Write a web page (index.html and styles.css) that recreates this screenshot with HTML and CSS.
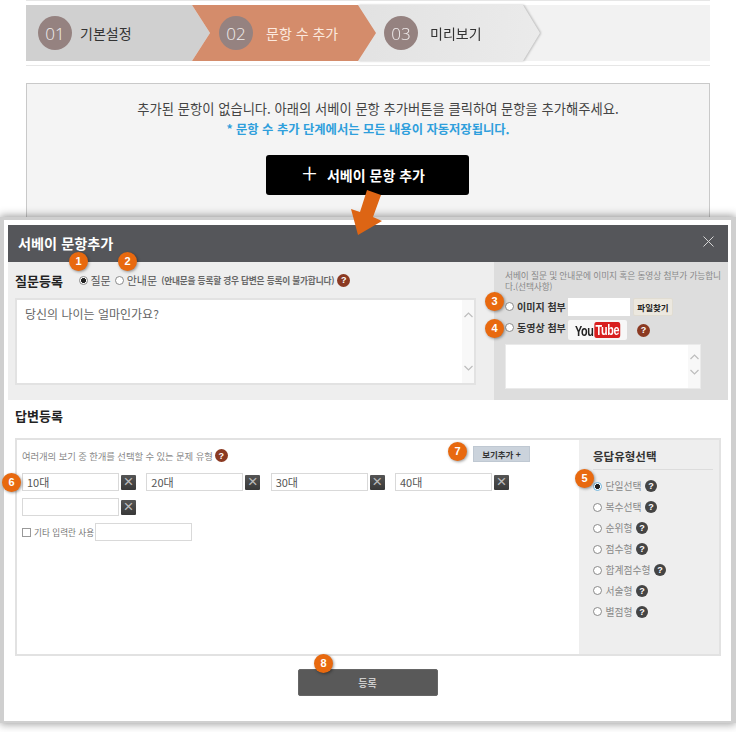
FILE: index.html
```html
<!DOCTYPE html>
<html lang="ko">
<head>
<meta charset="utf-8">
<title>서베이 문항추가</title>
<link rel="stylesheet" href="styles.css">
</head>
<body>
<div class="page">
  <div class="rule rule-top"></div>
  <ol class="steps">
    <li class="step step-done"><span class="step-no">01</span><span class="step-label">기본설정</span></li>
    <li class="step step-active"><span class="step-no">02</span><span class="step-label">문항 수 추가</span></li>
    <li class="step step-next"><span class="step-no">03</span><span class="step-label">미리보기</span></li>
  </ol>
  <div class="rule"></div>
  <section class="empty">
    <p class="empty-text">추가된 문항이 없습니다. 아래의 서베이 문항 추가버튼을 클릭하여 문항을 추가해주세요.</p>
    <p class="empty-note">* 문항 수 추가 단계에서는 모든 내용이 자동저장됩니다.</p>
    <button class="add-btn" type="button"><span class="plus">+</span>서베이 문항 추가</button>
  </section>
</div>

<div class="modal">
  <header class="modal-head">
    <h1 class="modal-title">서베이 문항추가</h1>
    <svg class="modal-close" width="11" height="11" viewBox="0 0 11 11"><path d="M.5.5l10 10M10.5.5l-10 10" stroke="#d5d5d5" stroke-width="1" fill="none"/></svg>
  </header>

  <div class="question">
    <div class="q-left">
      <div class="q-row">
        <h2 class="section-title q-title">질문등록</h2>
        <span class="radio radio-on"></span><span class="q-opt">질문</span>
        <span class="radio q-radio2"></span><span class="q-opt">안내문</span>
        <span class="q-hint">(안내문을 등록할 경우 답변은 등록이 불가합니다)</span>
        <span class="help help-red">?</span>
      </div>
      <div class="area area-q">
        <span>당신의 나이는 얼마인가요?</span>
        <div class="scroll scroll-q">
          <svg width="9" height="6" viewBox="0 0 9 6"><path d="M.5 5L4.5 1l4 4" class="chev"/></svg>
          <svg width="9" height="6" viewBox="0 0 9 6"><path d="M.5 1l4 4 4-4" class="chev"/></svg>
        </div>
      </div>
    </div>
    <div class="q-right">
      <p class="attach-note">서베이 질문 및 안내문에 이미지 혹은 동영상 첨부가 가능합니<br>다.(선택사항)</p>
      <div class="attach-row">
        <span class="radio"></span><span class="attach-label">이미지 첨부</span>
        <span class="file-box"></span>
        <button class="file-btn" type="button">파일찾기</button>
      </div>
      <div class="attach-row attach-row2">
        <span class="radio"></span><span class="attach-label">동영상 첨부</span>
        <span class="yt"><span class="yt-logo"><span class="yt-you">You</span><span class="yt-tube">Tube</span></span></span>
        <span class="help help-red help-yt">?</span>
      </div>
      <div class="area area-v">
        <div class="scroll scroll-v">
          <svg width="9" height="6" viewBox="0 0 9 6"><path d="M.5 5L4.5 1l4 4" class="chev"/></svg>
          <svg width="9" height="6" viewBox="0 0 9 6"><path d="M.5 1l4 4 4-4" class="chev"/></svg>
        </div>
      </div>
    </div>
  </div>

  <h2 class="section-title a-title">답변등록</h2>

  <div class="answers">
    <div class="a-main">
      <div class="a-top">
        <span class="a-desc">여러개의 보기 중 한개를 선택할 수 있는 문제 유형</span>
        <span class="help help-red">?</span>
        <button class="more-btn" type="button">보기추가 +</button>
      </div>
      <div class="choices">
        <div class="choice"><span class="choice-box">10대</span><span class="del">×</span></div>
        <div class="choice"><span class="choice-box">20대</span><span class="del">×</span></div>
        <div class="choice"><span class="choice-box">30대</span><span class="del">×</span></div>
        <div class="choice"><span class="choice-box">40대</span><span class="del">×</span></div>
        <div class="choice"><span class="choice-box"></span><span class="del">×</span></div>
      </div>
      <div class="etc">
        <span class="check"></span><span class="etc-label">기타 입력란 사용</span><span class="choice-box"></span>
      </div>
    </div>
    <aside class="types">
      <h3 class="types-title">응답유형선택</h3>
      <ul class="type-list">
        <li class="type"><span class="radio radio-sel"></span><span>단일선택</span><span class="help">?</span></li>
        <li class="type"><span class="radio"></span><span>복수선택</span><span class="help">?</span></li>
        <li class="type"><span class="radio"></span><span>순위형</span><span class="help">?</span></li>
        <li class="type"><span class="radio"></span><span>점수형</span><span class="help">?</span></li>
        <li class="type"><span class="radio"></span><span>합계점수형</span><span class="help">?</span></li>
        <li class="type"><span class="radio"></span><span>서술형</span><span class="help">?</span></li>
        <li class="type"><span class="radio"></span><span>별점형</span><span class="help">?</span></li>
      </ul>
    </aside>
  </div>

  <div class="submit-row"><button class="submit" type="button">등록</button></div>

  <span class="badge b1">1</span>
  <span class="badge b2">2</span>
  <span class="badge b3">3</span>
  <span class="badge b4">4</span>
  <span class="badge b5">5</span>
  <span class="badge b6">6</span>
  <span class="badge b7">7</span>
  <span class="badge b8">8</span>
</div>

<svg class="arrow" width="40" height="48" viewBox="0 0 40 48"><polygon points="20,0 34,5 26,27 35,31 11,45 4,19 13,22" fill="#dd6514"/></svg>
</body>
</html>
```
FILE: styles.css
```css
* { box-sizing: border-box; }
html, body { margin: 0; padding: 0; }
body {
  width: 736px;
  height: 732px;
  overflow: hidden;
  position: relative;
  background: #fff;
  font-family: "Noto Sans CJK KR", "Noto Sans", sans-serif;
  color: #333;
}
h1, h2, h3, p, ol, ul { margin: 0; padding: 0; list-style: none; }
button { font-family: inherit; padding: 0; cursor: pointer; }

.page { padding: 0 26px; }
.rule { height: 1px; background: #e6e6e6; }
.rule-top { margin-bottom: 4px; }

/* steps */
.steps {
  display: flex;
  height: 56px;
  background: #f2f2f2;
  margin-bottom: 4px;
}
.step {
  position: relative;
  width: 184px;
  margin-right: -18px;
  display: flex;
  align-items: center;
  font-size: 14px;
  color: #333;
}
.step::before {
  content: "";
  position: absolute;
  inset: 0;
  z-index: -1;
  clip-path: polygon(0 0, 166px 0, 184px 50%, 166px 100%, 0 100%, 18px 50%);
}
.step-done { padding-left: 12px; z-index: 1; }
.step-done::before { background: #d0d0d0; clip-path: polygon(0 0, 166px 0, 184px 50%, 166px 100%, 0 100%); }
.step-active { color: #fce9de; padding-left: 27px; z-index: 2; }
.step-active::before { background: #d48c6b; }
.step-next {
  width: 182px;
  padding-left: 26px;
  filter: drop-shadow(1px 0 1px rgba(0,0,0,.25));
}
.step-next::before {
  background: linear-gradient(100deg, #e2e2e2, #ebebeb);
  clip-path: polygon(0 0, 165px 0, 182px 50%, 165px 100%, 0 100%);
}
.step-no {
  width: 34px;
  height: 34px;
  border-radius: 50%;
  background: #958280;
  color: #f2eeee;
  font-family: "Open Sans", sans-serif;
  font-weight: 300;
  font-size: 17px;
  display: flex;
  align-items: center;
  justify-content: center;
  margin-right: 8px;
}
.step-active .step-no { margin-right: 13px; }
.step-next .step-no { margin-right: 12px; }

/* empty panel */
.empty {
  margin-top: 17px;
  height: 150px;
  border: 1px solid #c9c9c9;
  background: #f4f4f4;
  text-align: center;
  padding-top: 15px;
}
.empty-text { font-size: 13.3px; line-height: 20px; color: #444; padding-left: 20px; }
.empty-note { font-size: 12.3px; line-height: 20px; color: #2f9fdc; font-weight: 700; }
.add-btn {
  display: inline-flex;
  align-items: center;
  justify-content: center;
  width: 203px;
  height: 40px;
  margin: 16px 0 0 -1px;
  padding-right: 8px;
  border: 0;
  border-radius: 3px;
  background: #000;
  color: #fff;
  font-size: 14px;
  font-weight: 700;
}
.plus { font-size: 28px; font-weight: 300; line-height: 1; margin-right: 10px; margin-top: -6px; }

/* modal */
.modal {
  position: absolute;
  left: 0;
  top: 217px;
  width: 736px;
  height: 506px;
  background: #fff;
  border: solid #cfcfcf;
  border-width: 3px 5px 2px 4px;
  padding: 5px 3px 0 4px;
  box-shadow: 0 -2px 8px rgba(0,0,0,.3), 0 3px 8px rgba(0,0,0,.2);
}
.modal-head {
  height: 37px;
  background: #55565a;
  display: flex;
  align-items: center;
  justify-content: space-between;
  padding: 0 14px 0 10px;
}
.modal-title { font-size: 14.2px; font-weight: 700; color: #fff; margin-top: -2px; }
.modal-close { margin-top: -5px; }

.question { display: flex; height: 138px; }
.q-left { width: 486px; background: #eeeeee; padding: 0 18px 0 7px; }
.q-right { width: 234px; background: #dddddd; padding: 8px 0 0 11px; position: relative; }
.q-row { display: flex; align-items: center; height: 36px; }
.section-title { font-size: 13px; font-weight: 700; color: #222; }
.q-title { width: 63.5px; }
.q-opt { font-size: 11px; color: #555; margin-left: 3px; }
.q-radio2 { margin-left: 4px; }
.q-hint { font-size: 8.7px; font-weight: 700; color: #666; margin: 0 3px 0 4px; letter-spacing: -.2px; }

.radio {
  display: inline-block;
  flex: none;
  width: 9px;
  height: 9px;
  border: 1px solid #8a8a8a;
  border-radius: 50%;
  background: #fff;
}
.radio-on, .radio-sel { background: radial-gradient(circle, #222 0 2.2px, #fff 2.8px); }
.radio-sel { border-color: #6fb5de; }

.help {
  display: inline-flex;
  flex: none;
  width: 13px;
  height: 13px;
  border-radius: 50%;
  align-items: center;
  justify-content: center;
  background: #444;
  color: #fff;
  font-size: 9px;
  font-weight: 700;
  font-family: "Liberation Sans", sans-serif;
}
.help-red { background: #8b3a22; }

.area {
  background: #fff;
  position: relative;
  color: #666;
  font-size: 12px;
}
.area-q {
  height: 87px;
  border: 2px solid #e2e2e2;
  padding: 4px 8px;
  line-height: 20px;
}
.scroll {
  position: absolute;
  top: 0;
  right: 0;
  bottom: 0;
  width: 12px;
  background: #f8f8f8;
  display: flex;
  flex-direction: column;
  align-items: center;
  justify-content: space-between;
}
.scroll-q { padding: 12px 0; }
.scroll-v { padding: 9px 0; justify-content: flex-start; gap: 9px; }
.chev { fill: none; stroke: #bdbdbd; stroke-width: 1.2; }

.attach-note { font-size: 8.7px; line-height: 11px; color: #888; white-space: nowrap; letter-spacing: -.1px; }
.attach-row { display: flex; align-items: center; height: 18px; margin-top: 6px; position: relative; }
.attach-row .radio, .attach-row .attach-label { margin-bottom: 2px; }
.attach-row2 { height: 20px; margin-top: 4px; }
.attach-row2 .radio, .attach-row2 .attach-label { margin-bottom: 6px; }
.attach-label { font-size: 10px; font-weight: 700; color: #333; width: 51px; margin-left: 3px; white-space: nowrap; }
.file-box { width: 62px; height: 18px; background: #fff; }
.file-btn {
  width: 40px;
  height: 18px;
  margin-left: 3px;
  border: 1px solid #e0dcd2;
  border-radius: 2px;
  background: #ece8df;
  color: #222;
  font-size: 8.5px;
  font-weight: 700;
}
.yt {
  width: 59px;
  height: 20px;
  background: #f7f7f7;
  border-radius: 2px;
  display: flex;
  align-items: center;
  justify-content: center;
  overflow: hidden;
}
.yt-logo {
  display: flex;
  align-items: center;
  font-family: "Liberation Sans", sans-serif;
  font-weight: 700;
  font-size: 15px;
  transform: scaleX(.72);
  white-space: nowrap;
}
.yt-you { color: #222; letter-spacing: -.5px; }
.yt-tube { background: #d81f1f; color: #fff; border-radius: 3px; padding: 0 2px; margin-left: 1px; letter-spacing: -.5px; line-height: 16px; }
.help-yt { margin-left: 10px; }
.area-v {
  width: 196px;
  height: 45px;
  margin-top: 4px;
  border: 1px solid #eaeaea;
}

.a-title { margin: 7px 0 0 7px; line-height: 18px; height: 31px; }
.answers {
  margin: 0 7px;
  height: 218px;
  border: 2px solid #e2e2e2;
  display: flex;
}
.a-main { width: 562px; padding: 6px 0 0 5px; }
.a-top { display: flex; align-items: center; height: 19px; margin-bottom: 8px; position: relative; }
.a-desc { font-size: 9.4px; color: #888; margin-right: 2px; letter-spacing: -.1px; }
.more-btn {
  position: absolute;
  left: 451px;
  top: 0;
  width: 57px;
  height: 16px;
  border: 1px solid #bfc8d2;
  background: #cbd3dc;
  color: #333;
  font-size: 8.5px;
  font-weight: 700;
}
.choices { display: flex; flex-wrap: wrap; gap: 7px 10.33px; }
.choice { display: flex; align-items: center; gap: 2px; width: 114px; }
.choice-box {
  display: block;
  flex: none;
  width: 97px;
  height: 18px;
  border: 1px solid #d9d9d9;
  background: #fff;
  padding-left: 4px;
  font-size: 11px;
  line-height: 16px;
  color: #555;
}
.del {
  flex: none;
  width: 15px;
  height: 15px;
  background: linear-gradient(#555, #383838);
  border-radius: 1px;
  color: #bbb;
  font: 400 17px/14px "Liberation Sans", sans-serif;
  text-align: center;
}
.etc { display: flex; align-items: center; margin-top: 7px; }
.check { width: 9px; height: 9px; border: 1px solid #999; background: #fff; flex: none; margin-right: 3px; }
.etc-label { font-size: 8.6px; color: #777; width: 61px; white-space: nowrap; }

.types { width: 140px; background: #eeeeee; padding: 7px 6px 0 14px; }
.types-title {
  font-size: 11.5px;
  font-weight: 700;
  color: #333;
  height: 23px;
  line-height: 18px;
  border-bottom: 1px solid #dcdcdc;
}
.type-list { margin-top: 6px; }
.type {
  display: flex;
  align-items: center;
  height: 20.9px;
  font-size: 9.8px;
  color: #888;
  gap: 3.5px;
}
.type .help { width: 12px; height: 12px; }

.submit-row { display: flex; justify-content: center; margin-top: 13px; padding-right: 1px; }
.submit {
  width: 140px;
  height: 27px;
  background: #595959;
  border: 1px solid #666;
  border-radius: 2px;
  color: #ccc;
  font-size: 10px;
  font-weight: 700;
}

/* numbered callouts */
.badge {
  position: absolute;
  width: 19px;
  height: 19px;
  border-radius: 50%;
  background: #e8690f;
  color: #fff;
  font: 700 11px/19px "Liberation Sans", sans-serif;
  text-align: center;
  box-shadow: 1px 1px 3px rgba(0,0,0,.4);
  z-index: 3;
}
.b1 { left: 65px;  top: 32px; }
.b2 { left: 114px; top: 32px; }
.b3 { left: 481px; top: 72px; }
.b4 { left: 481px; top: 99px; }
.b5 { left: 571px; top: 249px; }
.b6 { left: -2px;  top: 253px; }
.b7 { left: 444px; top: 222px; }
.b8 { left: 310px; top: 434px; }

.arrow { position: absolute; left: 347px; top: 190px; z-index: 5; }
```
